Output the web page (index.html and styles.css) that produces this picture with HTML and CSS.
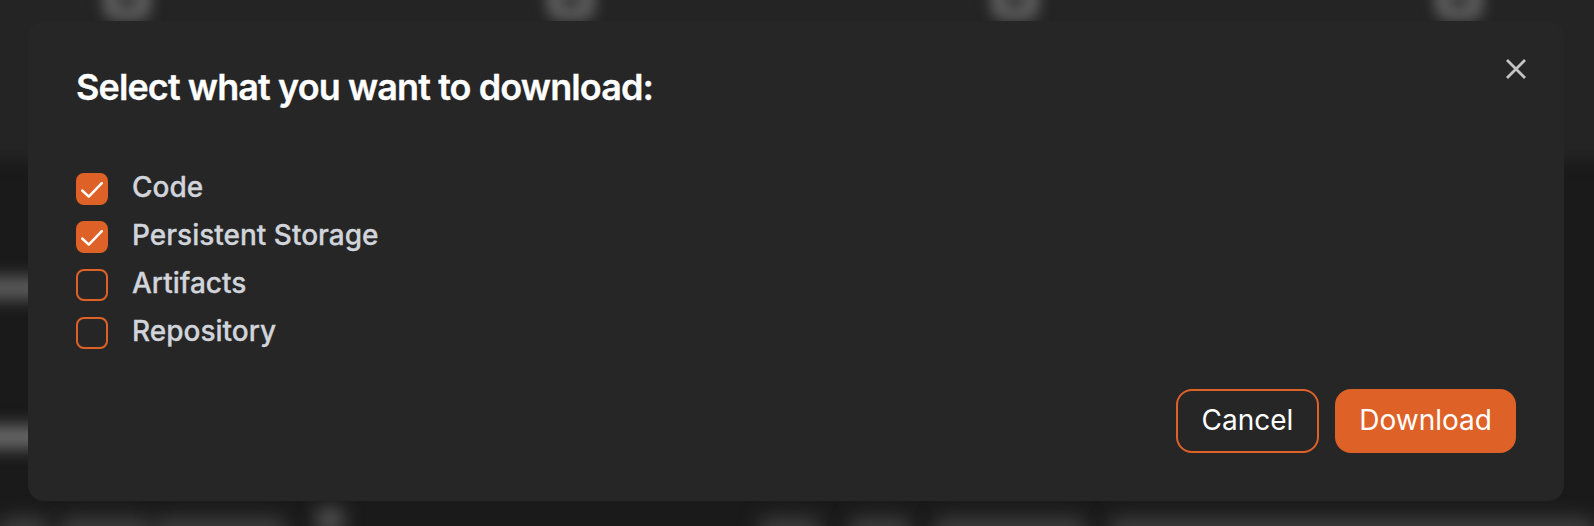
FILE: index.html
```html
<!DOCTYPE html>
<html lang="en">
<head>
<meta charset="utf-8">
<title>Download</title>
<link rel="stylesheet" href="styles.css">
</head>
<body>
<div class="backdrop" aria-hidden="true">
  <div class="band"></div>
  <span class="blob top t1"></span>
  <span class="blob top t2"></span>
  <span class="blob top t3"></span>
  <span class="blob top t4"></span>
  <span class="blob side s1"></span>
  <span class="blob side s2"></span>
  <span class="blob foot f1"></span>
  <span class="blob foot f2"></span>
  <span class="blob foot f3"></span>
  <span class="blob foot f4"></span>
  <span class="blob foot f5"></span>
  <span class="blob foot f6"></span>
  <span class="blob foot f7"></span>
  <span class="blob foot f8"></span>
</div>
<main class="modal">
  <button class="close" type="button" aria-label="Close">
    <svg width="20" height="20" viewBox="0 0 20 20"><path d="M1 1L19 19M19 1L1 19"/></svg>
  </button>
  <h1 class="title">Select what you want to download:</h1>
  <ul class="options">
    <li class="option">
      <span class="box on"><svg width="22" height="16" viewBox="0 0 22 16"><path d="M1.2 8.5L7.8 14.6L20.8 1.2"/></svg></span>
      <span class="label">Code</span>
    </li>
    <li class="option">
      <span class="box on"><svg width="22" height="16" viewBox="0 0 22 16"><path d="M1.2 8.5L7.8 14.6L20.8 1.2"/></svg></span>
      <span class="label">Persistent Storage</span>
    </li>
    <li class="option">
      <span class="box"></span>
      <span class="label">Artifacts</span>
    </li>
    <li class="option">
      <span class="box"></span>
      <span class="label">Repository</span>
    </li>
  </ul>
  <div class="actions">
    <button class="btn outline" type="button">Cancel</button>
    <button class="btn solid" type="button">Download</button>
  </div>
</main>
</body>
</html>
```
FILE: styles.css
```css
* { box-sizing: border-box; }
html, body { height: 100%; }
body {
  margin: 0;
  width: 1594px;
  height: 526px;
  overflow: hidden;
  position: relative;
  padding: 21px 30px 25px 28px;
  background: #1a1a1a;
  font-family: Inter, "Liberation Sans", sans-serif;
}
.backdrop {
  position: absolute;
  inset: 0;
  overflow: hidden;
}
.band {
  position: absolute;
  left: -20px;
  right: -20px;
  top: -20px;
  height: 180px;
  background: #242424;
  filter: blur(8px);
}
.blob {
  position: absolute;
  background: #6a6a6a;
  border-radius: 6px;
  filter: blur(9px);
}
.top {
  top: -18px;
  width: 48px;
  height: 38px;
  background: transparent;
  border: 14px solid #606060;
  border-radius: 14px;
  filter: blur(7px);
}
.t1 { left: 103px; }
.t2 { left: 547px; }
.t3 { left: 991px; }
.t4 { left: 1435px; }
.side { left: -24px; width: 72px; height: 20px; }
.s1 { top: 278px; background: #666; }
.s2 { top: 427px; background: #757575; }
.foot { top: 519px; height: 20px; background: #444; filter: blur(10px); }
.f1 { left: 0; width: 48px; }
.f2 { left: 60px; width: 90px; }
.f3 { left: 155px; width: 130px; }
.f4 { left: 318px; width: 24px; background: #6a6a6a; top: 510px; }
.f5 { left: 760px; width: 60px; }
.f6 { left: 850px; width: 60px; }
.f7 { left: 935px; width: 150px; }
.f8 { left: 1110px; width: 484px; }
.modal {
  position: relative;
  display: flex;
  flex-direction: column;
  height: 480px;
  padding: 46px 48px 48px 48px;
  background: #262626;
  border-radius: 16px;
}
.close {
  position: absolute;
  top: 38px;
  right: 38px;
  padding: 0;
  border: 0;
  background: none;
  width: 20px;
  height: 20px;
  display: block;
}
.close svg { display: block; }
.close path { fill: none; stroke: #c4c4c4; stroke-width: 2.8; }
.title {
  margin: 0;
  font-size: 36px;
  line-height: 40px;
  font-weight: 600;
  letter-spacing: -0.9px;
  color: #fff;
  -webkit-text-stroke: 0.3px #fff;
}
.options {
  list-style: none;
  margin: 0;
  padding: 66px 0 0;
  display: flex;
  flex-direction: column;
  gap: 16px;
}
.option {
  display: flex;
  align-items: center;
  gap: 24px;
  height: 32px;
}
.box {
  width: 32px;
  height: 32px;
  border: 2px solid #de6228;
  border-radius: 8px;
  display: flex;
  align-items: center;
  justify-content: center;
  flex: none;
}
.box.on { background: #de6228; }
.box svg { display: block; margin-top: 2px; }
.box path { fill: none; stroke: #fff; stroke-width: 2.4; stroke-linecap: round; stroke-linejoin: round; }
.label {
  font-size: 28px;
  font-weight: 500;
  line-height: 32px;
  padding-bottom: 4px;
  color: #d1d5db;
  -webkit-text-stroke: 0.3px #d1d5db;
}
.actions {
  margin-top: auto;
  display: flex;
  justify-content: flex-end;
  gap: 16px;
}
.btn {
  height: 64px;
  padding: 0 24px 2px;
  border-radius: 16px;
  font-family: inherit;
  font-size: 28px;
  font-weight: 400;
  color: #fff;
}
.outline { background: transparent; border: 2px solid #de6228; }
.solid { background: #de6228; border: 0; }
```
